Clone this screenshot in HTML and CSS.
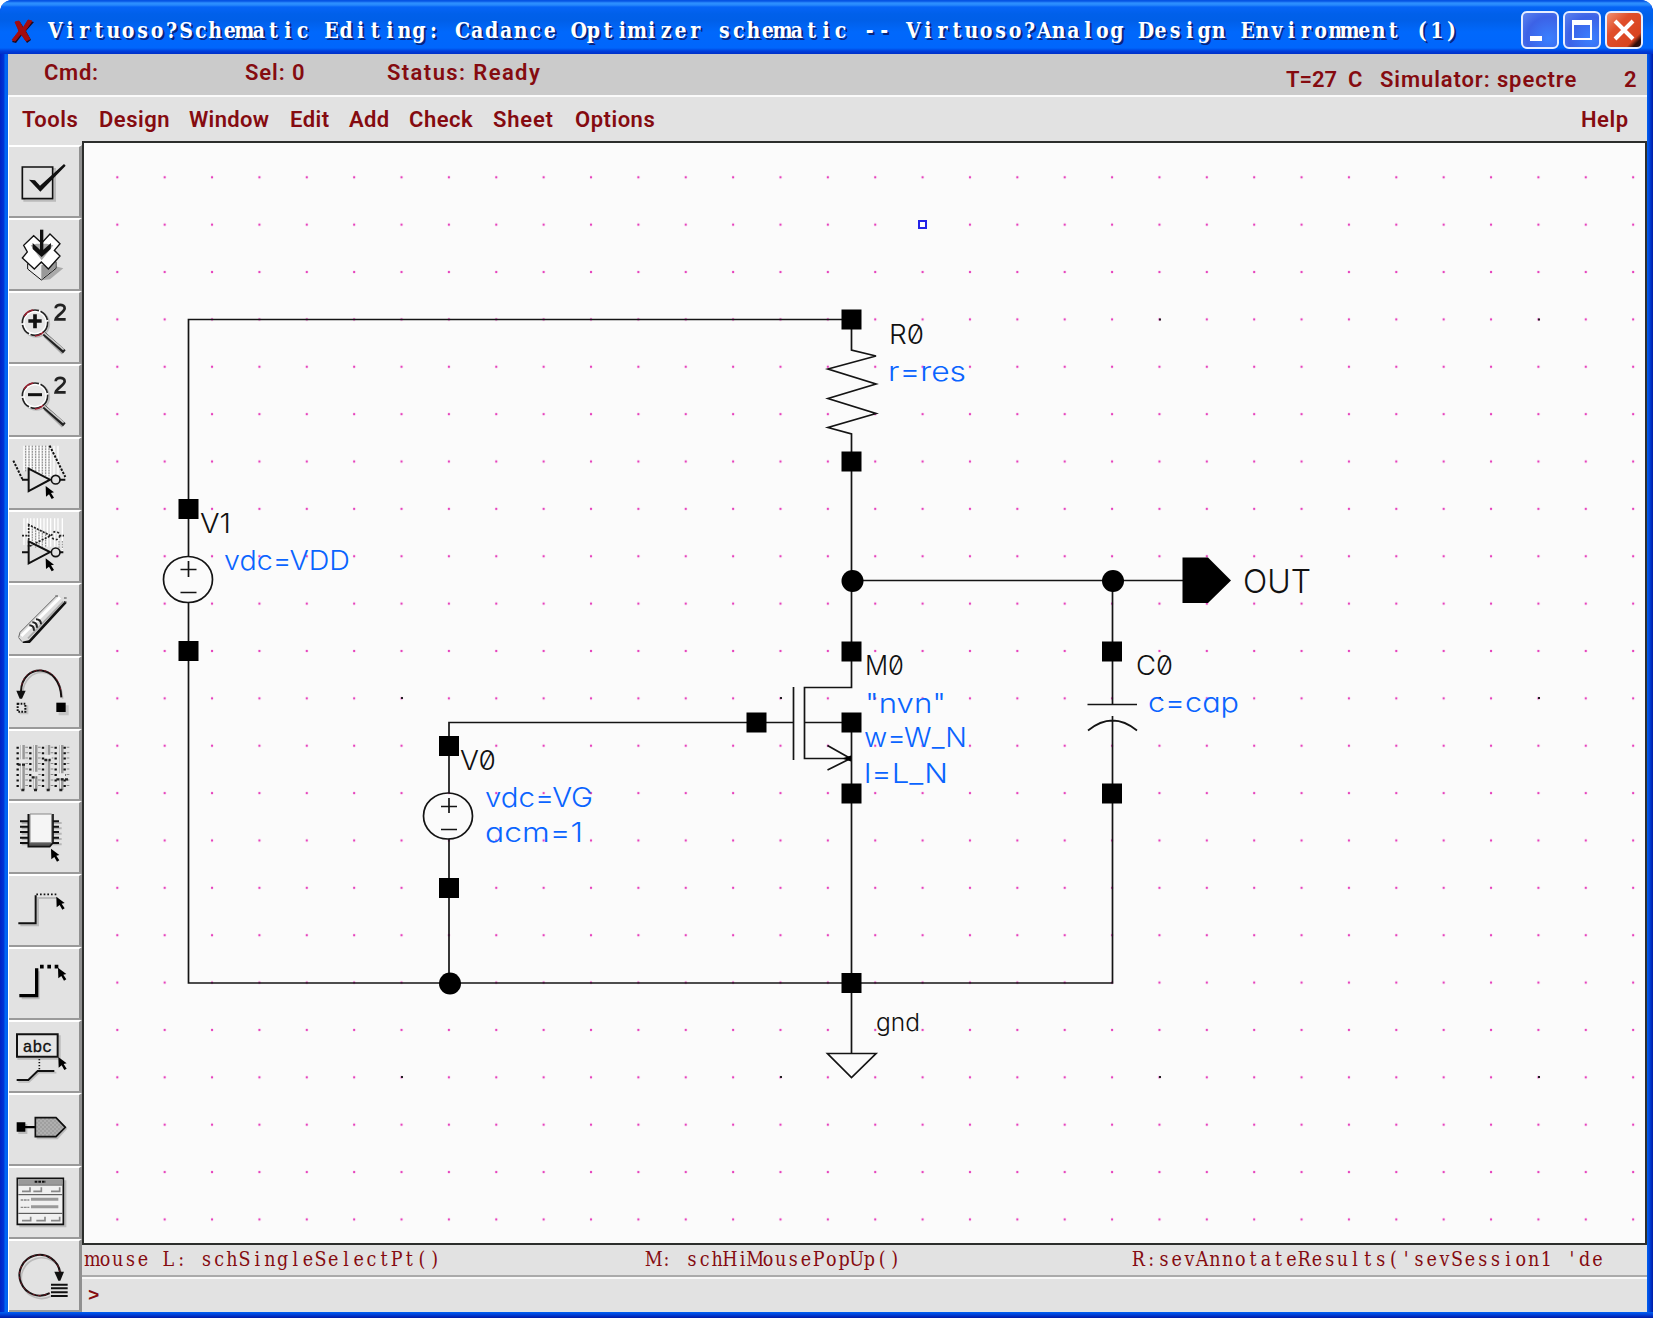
FILE: index.html
```html
<!DOCTYPE html>
<html lang="en">
<head>
<meta charset="utf-8">
<title>Virtuoso Schematic Editing</title>
<link rel="stylesheet" href="styles.css">
</head>
<body>
<div class="window">
  <header class="titlebar">
    <svg class="app-icon" viewBox="0 0 24 26"><path d="M5 3 9 3 13 9 18 2 23 3 15 12 20 21 16 24 11 16 5 24 1 23 8 13Z" fill="#1a0a20"/><path d="M4 3 8 2 12 9 17 1 21 2 14 12 19 20 15 22 10 15 4 22 1 21 8 12Z" fill="#a30c10" stroke="#a30c10"/></svg>
    <svg class="title-text" width="1430" height="40"><g transform="scale(.98 1)"><text class="mono" data-pitch="14.84" y="27">Virtuoso?Schematic Editing: Cadance Optimizer schematic -- Virtuoso?Analog Design Environment (1)</text></g></svg>
    <div class="controls">
      <button class="ctl"><svg viewBox="0 0 38 38"><path d="M9 25h12v5H9z" fill="#fff"/></svg></button>
      <button class="ctl"><svg viewBox="0 0 38 38"><path d="M10 11h18v17H10z" fill="none" stroke="#fff" stroke-width="2"/><path d="M9 9h20v5H9z" fill="#fff"/></svg></button>
      <button class="ctl close"><svg viewBox="0 0 38 38"><path d="M10 10 28 28M28 10 10 28" stroke="#fff" stroke-width="4"/></svg></button>
    </div>
  </header>

  <div class="status">
    <span class="s-cmd">Cmd:</span><span class="s-sel">Sel: 0</span><span class="s-state">Status: Ready</span>
    <span class="s-temp">T=27&nbsp; C</span><span class="s-sim">Simulator: spectre</span><span class="s-num">2</span>
  </div>

  <nav class="menu">
    <span class="m-tools">Tools</span><span class="m-design">Design</span><span class="m-window">Window</span><span class="m-edit">Edit</span><span class="m-add">Add</span><span class="m-check">Check</span><span class="m-sheet">Sheet</span><span class="m-options">Options</span><span class="m-help">Help</span>
  </nav>

  <div class="body">
    <svg class="defs" width="0" height="0"><defs>
      <path id="cursor" d="M0 0 25 19 16 21 25 35 18 39 10 25 1 32Z"/>
      <g id="lens"><circle cx="109" cy="550" r="39" fill="none" stroke="#bbb" stroke-width="5"/><path d="M135 584 190 637" stroke="#aaa" stroke-width="13"/><circle cx="105" cy="546" r="36" fill="#e6e6e6" stroke="#fff" stroke-width="9"/><circle cx="105" cy="546" r="38" fill="none" stroke="#222" stroke-width="5" stroke-dasharray="34 5"/><path d="M72 527a38 38 0 0 1 28-19M105 586a38 38 0 0 0 25-12" fill="none" stroke="#9a2030" stroke-width="4"/><path d="M132 579 193 633" stroke="#222" stroke-width="12"/><path d="M133 577 191 627" stroke="#ccc" stroke-width="5"/><path d="M167 503c0-14 27-14 27 0 0 12-24 20-27 33h30" fill="none" stroke="#222" stroke-width="8"/></g>
      <pattern id="check" width="4" height="4" patternUnits="userSpaceOnUse"><path d="M0 0h2v2H0zM2 2h2v2H2z" fill="#888"/></pattern>
    </defs></svg>
    <aside class="tools">
      <button><svg viewBox="24 16 216 218"><path d="M73 85h92v95H73z" fill="none" stroke="#bbb" stroke-width="6"/><path d="M67 79h91v95H67z" fill="#e2e2e2" stroke="#111" stroke-width="5"/><path d="M87 117 105 119 120 135 192 70 197 75 121 153Z" fill="#111"/></svg></button>
      <button><svg viewBox="24 236 216 218"><path d="M125 420 166 378 190 384 150 417Z" fill="#aaa"/><path d="M83 370v16l41 33 44-35v-20Z" fill="#eee" stroke="#111" stroke-width="3"/><path d="M124 375v42l42-33v-22Z" fill="#999"/><path d="M67 353 82 335 71 315 101 286 125 308 150 281 180 310 163 330 180 347 145 386 124 365 103 386Z" fill="#fff" stroke="#111" stroke-width="4"/><path d="M92 315 125 360 160 315 140 310 110 310Z" fill="#aaa"/><path d="M125 268v70" stroke="#111" stroke-width="10"/><path d="M98 308 120 328h10l23-20-1 18-27 24-27-24Z" fill="#111"/></svg></button>
      <button><svg viewBox="24 454 216 218"><use href="#lens"/><path d="M85 541h40M105 521v42" stroke="#111" stroke-width="11"/></svg></button>
      <button><svg viewBox="24 672 216 218"><use href="#lens" y="218"/><path d="M84 761h42" stroke="#111" stroke-width="9"/></svg></button>
      <button><svg viewBox="24 20 216 218"><path d="M72 43v75M82 43v67M92 43v70M102 43v76M112 43v80M122 43v85M132 43v90M142 43v95M152 45v90M162 43v87M174 43v87" stroke="#fff" stroke-width="4"/><path d="M77 43v80M87 43v70M97 43v70M107 43v76M117 43v80M127 43v85M137 43v90M147 43v90" stroke="#888" stroke-width="3" stroke-dasharray="5 3"/><path d="M40 88 67 143M149 43 196 137" stroke="#111" stroke-width="6" stroke-dasharray="7 4"/><path d="M86 112v67l64-34ZM66 145h20M180 145h16" fill="none" stroke="#111" stroke-width="6"/><circle cx="167" cy="145" r="13" fill="#e2e2e2" stroke="#111" stroke-width="5"/><use href="#cursor" x="137" y="164"/></svg></button>
      <button><svg viewBox="24 240 216 218"><path d="M72 262v80M82 262v80M92 262v80M102 262v80M112 262v80M122 262v82M132 262v85M142 262v85M152 262v85M164 262v85M174 262v85M187 262v98" stroke="#fff" stroke-width="4"/><path d="M97 285v60M107 290v60M117 295v55M127 298v55M137 302v45M177 330v25M187 330v25" stroke="#888" stroke-width="3" stroke-dasharray="5 3"/><path d="M86 281v66l66-33ZM66 314h18M178 314h14" fill="none" stroke="#222" stroke-width="5" stroke-dasharray="6 4"/><circle cx="167" cy="314" r="12" fill="none" stroke="#222" stroke-width="5" stroke-dasharray="6 6"/><path d="M86 331v66l64-34ZM66 364h20M180 364h10" fill="none" stroke="#111" stroke-width="6"/><circle cx="167" cy="364" r="13" fill="#e2e2e2" stroke="#111" stroke-width="5"/><use href="#cursor" x="137" y="382"/></svg></button>
      <button><svg viewBox="24 458 216 218"><path d="M68 631h20L197 512" fill="none" stroke="#111" stroke-width="8"/><path d="M55 618 60 600 168 492 195 499 84 627 67 631Z" fill="#ddd"/><path d="M64 614 180 498" stroke="#fff" stroke-width="9"/><path d="M84 621 190 511" stroke="#aaa" stroke-width="5"/><path d="M56 618 60 603 168 495M66 631 56 619" fill="none" stroke="#666" stroke-width="3"/><path d="M88 582q14 0 14 16M97 573q14 0 14 16M108 564q15 0 15 15" fill="none" stroke="#222" stroke-width="6"/><path d="M166 494h8M192 500h8M192 512h8" stroke="#444" stroke-width="3"/></svg></button>
      <button><svg viewBox="24 677 216 218"><path d="M68 786C74 700 182 700 188 802" fill="none" stroke="#bbb" stroke-width="5"/><path d="M63 780C66 694 180 694 184 798" fill="none" stroke="#151010" stroke-width="6"/><path d="M65 762C76 700 170 698 182 775" fill="none" stroke="#a02030" stroke-width="2" stroke-dasharray="8 7"/><path d="M49 778h28L66 802h-7Z" fill="#111"/><path d="M176 822h30v30h-30zM58 822h27v27H58z" fill="#c4c4c4"/><path d="M169 814h28v28h-28z" fill="#000"/><path d="M53 817h23v24H53z" fill="#e2e2e2" stroke="#111" stroke-width="6" stroke-dasharray="5 4"/></svg></button>
      <button><svg viewBox="24 10 216 218"><path d="M68 55v135M106 55v135M144 55v135M184 55v135" stroke="#999" stroke-width="13"/><path d="M65 55v135M103 55v135M141 55v135M181 55v135" stroke="#eee" stroke-width="4"/><path d="M53 60v124M91 60v124M129 60v124M167 60v124M194 60v124" stroke="#111" stroke-width="7" stroke-dasharray="6 10.4"/><path d="M80 60v124M118 60v124M156 60v124M204 60v124" stroke="#888" stroke-width="8" stroke-dasharray="3 13.4"/><path d="M57 105h18M95 142h20M135 91h20M172 147h24" stroke="#e8e8e8" stroke-width="14"/><path d="M53 114h23M95 152h14M133 100h19M169 158h38M64 190h10M102 190h10M140 190h10M178 190h10" stroke="#222" stroke-width="7" stroke-dasharray="9 4"/></svg></button>
      <button><svg viewBox="24 230 216 218"><path d="M65 293h120M65 309h120M65 325h120M65 341h120M65 357h120" stroke="#b5b5b5" stroke-width="6"/><path d="M60 288h27M60 304h27M60 320h27M60 337h27M60 353h27M155 288h22M155 304h22M155 320h22M155 337h22M155 353h22" stroke="#111" stroke-width="6"/><path d="M85 266v98h64l10-12v-86" fill="#555" stroke="#111" stroke-width="5"/><path d="M90 266h65v86H90z" fill="#f5f5f5" stroke="#888" stroke-width="3"/><use href="#cursor" x="153" y="370"/></svg></button>
      <button><svg viewBox="24 448 216 218"><path d="M61 599h53v-82h58" fill="none" stroke="#bbb" stroke-width="6"/><path d="M55 593h52v-84" fill="none" stroke="#111" stroke-width="6"/><path d="M109 506h62" stroke="#111" stroke-width="5" stroke-dasharray="5 6"/><use href="#cursor" x="169" y="513"/></svg></button>
      <button><svg viewBox="24 666 216 218"><path d="M65 816h50v-80" fill="none" stroke="#bbb" stroke-width="8"/><path d="M58 809h52v-82" fill="none" stroke="#000" stroke-width="10"/><path d="M120 722h56" stroke="#000" stroke-width="11" stroke-dasharray="11 11"/><use href="#cursor" x="174" y="725"/></svg></button>
      <button><svg viewBox="24 16 216 218"><path d="M55 62h124v67H55z" fill="none" stroke="#bbb" stroke-width="6"/><path d="M51 56h122v67H51z" fill="#e6e6e6" stroke="#111" stroke-width="6"/><text x="68" y="108" class="abc" textLength="88" lengthAdjust="spacingAndGlyphs">abc</text><path d="M55 199h32l30-28h52" fill="none" stroke="#bbb" stroke-width="5"/><path d="M50 193h35l28-27h50" fill="none" stroke="#111" stroke-width="6"/><path d="M118 130v32" stroke="#111" stroke-width="5" stroke-dasharray="4 5"/><use href="#cursor" x="175" y="124"/></svg></button>
      <button><svg viewBox="24 236 216 218"><path d="M55 326h27v30H55zM110 310h63l29 30-29 32h-63z" fill="#bbb"/><path d="M50 321h26v28H50zM76 332h30v7H76z" fill="#000"/><path d="M106 307h62l28 29-28 28h-62z" fill="#c6c6c6"/><path d="M106 307h62l28 29-28 28h-62z" fill="url(#check)" stroke="#111" stroke-width="5"/></svg></button>
      <button><svg viewBox="24 454 216 218"><path d="M58 494h141v141H58z" fill="#bbb"/><path d="M52 488h138v138H52z" fill="#f0f0f0" stroke="#111" stroke-width="5"/><path d="M55 491h132v15H55z" fill="#999"/><path d="M104 498h34" stroke="#111" stroke-width="6" stroke-dasharray="8 3"/><path d="M55 508h132M55 537h132M55 593h132" stroke="#444" stroke-width="3"/><path d="M93 551h82M93 573h82" stroke="#999" stroke-width="9"/><path d="M62 553h26M62 575h26" stroke="#888" stroke-width="4" stroke-dasharray="8 2"/><path d="M66 527h24v-12M100 527h24v-12M153 527h26v-12M66 615h26v-12M109 615h26v-12M153 615h26v-12" fill="none" stroke="#888" stroke-width="5"/></svg></button>
      <button><svg viewBox="24 670 216 218"><path d="M180 768A61 61 0 1 0 149 832" fill="none" stroke="#bbb" stroke-width="5" transform="translate(5 6)"/><path d="M180 768A61 61 0 1 0 149 829" fill="none" stroke="#151010" stroke-width="6"/><path d="M180 768A61 61 0 1 0 149 829" fill="none" stroke="#a02030" stroke-width="2" stroke-dasharray="9 8"/><path d="M163 765h29L181 792h-6Z" fill="#111"/><path d="M153 804h50M153 815h50M153 827h50M153 838h50" stroke="#111" stroke-width="6"/></svg></button>
    </aside>

    <div class="workspace">
      <svg class="canvas" viewBox="84 143 1561 1100">
        <defs><pattern id="grid" x="93.6" y="153.6" width="47.37" height="47.37" patternUnits="userSpaceOnUse"><circle cx="23.7" cy="23.7" r="1.2" fill="#e640bc"/></pattern></defs>
        <rect x="94" y="154" width="1551" height="1089" fill="url(#grid)"/>
        <g class="major"><path d="M401 698h2M780 698h2M1159 698h2M1538 698h2M401 1077h2M780 1077h2M1159 1077h2M1538 1077h2M1159 319.5h2M1538 319.5h2"/></g>
        <path d="M919 221h7v7h-7z" fill="#fff" stroke="#2424e8" stroke-width="2"/>
        <g class="wire">
          <path d="M188.500 509V319.5H851.5V350L876 356 828 369 876 384 828 398.500 876 413.500 828 427.500 851.500 434V651M188.500 509v47M188.500 602V983H1112.500V793"/>
          <path d="M449 745V722.500H793.500M449 745v48M449 839V983M851.500 651v36.500H804.500v71H851.500M804.500 722.500H851.500V1053.500M793.500 687v73M827.500 745.500 850.500 758.500 827.500 770M851.500 580.500H1184M1112.500 580.500V704.500M1087.500 704.500h49.500M1112.500 793V716M1088 730.500q24.500-20 49 0M827.500 1053.500h48.500L851.500 1077.500Z"/>
          <ellipse cx="188" cy="579.500" rx="24.500" ry="23"/><path d="M180.500 569.500h16M188.500 561v16M180.500 592.500h16"/>
          <ellipse cx="448" cy="816" rx="24.500" ry="23"/><path d="M441 806.500h16M449 798v15M441 829.500h16"/>
        </g>
        <path d="M178.500 499h20v20h-20zM178.500 641h20v20h-20zM439 736h20v20h-20zM439 878h20v20h-20zM746.500 712.500h20v20h-20zM841.500 309.500h20v20h-20zM841.500 451.500h20v20h-20zM841.500 641.500h20v20h-20zM841.500 712.500h20v20h-20zM841.500 783.500h20v20h-20zM841.500 973h20v20h-20zM1102 641.500h20v20h-20zM1102 783.500h20v20h-20zM1182.500 557.500h25.500l23 23-23 22.500h-25.500z"/>
        <circle cx="852.500" cy="581" r="11"/><circle cx="1113" cy="581" r="11"/><circle cx="450" cy="983.500" r="11"/>
        <path d="M842 758.500l9-3v6z"/>
        <g class="label">
          <text x="200" y="533" textLength="31" lengthAdjust="spacingAndGlyphs">V1</text><text x="889" y="344" textLength="35" lengthAdjust="spacingAndGlyphs">R0</text><text x="865" y="675" textLength="39" lengthAdjust="spacingAndGlyphs">M0</text><text x="1136" y="675" textLength="37" lengthAdjust="spacingAndGlyphs">C0</text><text x="460" y="770" textLength="36" lengthAdjust="spacingAndGlyphs">V0</text>
          <text class="small" x="876" y="1031" textLength="44" lengthAdjust="spacingAndGlyphs">gnd</text><text class="big" x="1243" y="593" textLength="68" lengthAdjust="spacingAndGlyphs">OUT</text>
        </g>
        <g class="label prop">
          <text x="224" y="569.500" textLength="126" lengthAdjust="spacingAndGlyphs">vdc=VDD</text><text x="888" y="380.500" textLength="78" lengthAdjust="spacingAndGlyphs">r=res</text><text x="865" y="712.500" textLength="81" lengthAdjust="spacingAndGlyphs">"nvn"</text><text x="864" y="747" textLength="103" lengthAdjust="spacingAndGlyphs">w=W_N</text><text x="864" y="783" textLength="84" lengthAdjust="spacingAndGlyphs">l=L_N</text><text x="1148" y="712" textLength="91" lengthAdjust="spacingAndGlyphs">c=cap</text><text x="485" y="806.500" textLength="108" lengthAdjust="spacingAndGlyphs">vdc=VG</text><text x="485" y="842" textLength="98" lengthAdjust="spacingAndGlyphs">acm=1</text>
        </g>
      </svg>
      <svg class="mouse" viewBox="84 1245 1561 30"><text class="mono" data-pitch="12.68" data-x="86" y="1266">mouse L: schSingleSelectPt()</text><text class="mono" data-pitch="12.68" data-x="647.500" y="1266">M: schHiMousePopUp()</text><text class="mono" data-pitch="12.75" data-x="1132" y="1266">R:sevAnnotateResults('sevSession1 'de</text></svg>
      <div class="prompt">&gt;</div>
    </div>
  </div>
</div>
<script src="app.js"></script>
</body>
</html>
```
FILE: app.js
```js
// Places the characters of fixed-pitch lines on an even character grid.
document.querySelectorAll('text.mono').forEach(function (t) {
  var pitch = +t.dataset.pitch, start = +(t.dataset.x || 0);
  t.setAttribute('x', Array.from(t.textContent, function (_, i) {
    return (start + (i + 0.5) * pitch).toFixed(2);
  }).join(' '));
});
```
FILE: styles.css
```css
* { box-sizing: border-box; }
body { margin: 0; background: #fff; overflow: hidden; }
svg { display: block; }
button { padding: 0; margin: 0; background: none; border: 0; }

.window {
  width: 1653px; height: 1318px;
  display: flex; flex-direction: column;
  padding: 0 6px 6px 8px;
  border-radius: 12px 12px 0 0;
  background: linear-gradient(90deg, #0023c4 0, #0034d8 4px, #0068f4 5px, #0060ee 8px, #0060ee 1647px, #0048e0 1649px, #001ca8 1653px);
  font-family: Roboto, "Liberation Sans", sans-serif;
  color: #850b10;
  position: relative;
}
.window::after {
  content: ""; position: absolute; left: 0; right: 0; bottom: 0; height: 6px;
  background: linear-gradient(#0060f0, #0044dc 40%, #0018a4);
}
.titlebar {
  height: 54px; flex: none; margin: 0 -6px 0 -8px; padding: 11px 10px 0 11px;
  display: flex; border-radius: 12px 12px 0 0;
  background: linear-gradient(#0654e4 0, #0654e4 1px, #2e90ff 3px, #2788fc 5px, #0664f6 7px, #0060ea 14px, #005fe8 20px, #0068fc 32px, #0066fc 48px, #0040dc 51px, #002fc8 54px);
}
.app-icon { width: 24px; height: 26px; margin-top: 8px; }
.title-text { margin-left: 13px; overflow: visible; }
.mono { font-family: "DejaVu Serif", serif; text-anchor: middle; }
.title-text .mono { font-size: 21.5px; font-weight: bold; font-stretch: condensed; fill: #fff; text-shadow: 2px 2px 0 #08247c; }
.controls { display: flex; gap: 4px; margin-left: auto; }
.ctl {
  width: 38px; height: 38px; border: 2px solid #e6eeff; border-radius: 6px;
  background: radial-gradient(circle at 75% 75%, #3a80ff, #3c62e6 60%, #5c84f0);
}
.ctl svg { width: 38px; height: 38px; margin: -2px; }
.ctl.close { background: linear-gradient(135deg, #f09070, #e04f2c 35%, #d84420 78%, #30100c 88%); }

.status {
  height: 41px; flex: none; display: flex; padding-left: 36px;
  background: #cbcbcb; font-size: 22px; font-weight: 600; line-height: 26px;
  padding-top: 6px; white-space: pre; letter-spacing: .9px;
}
.s-cmd { width: 201px; letter-spacing: .7px; }
.s-sel { width: 142px; }
.s-state { letter-spacing: 1.4px; }
.s-temp { margin-left: auto; width: 94px; letter-spacing: 0; }
.s-sim { width: 244px; }
.s-num { width: 23px; }
.s-temp, .s-sim, .s-num { padding-top: 7px; }

.menu {
  height: 46px; flex: none; display: flex; padding: 9px 0 0 13px;
  background: #e2e2e2; border-top: 2px solid #fafafa; border-left: 1px solid #fff;
  font-size: 22px; font-weight: 600; line-height: 28px; letter-spacing: .5px;
}
.m-tools { width: 77px; } .m-design { width: 90px; } .m-window { width: 101px; letter-spacing: .3px; }
.m-edit { width: 59px; } .m-add { width: 60px; letter-spacing: .3px; } .m-check { width: 84px; }
.m-sheet { width: 82px; letter-spacing: .8px; } .m-help { margin-left: auto; width: 66px; }

.body { flex: 1; display: flex; min-height: 0; }
.defs { position: absolute; }
.tools {
  width: 74px; display: grid; grid-template-rows: repeat(16, 1fr);
  background: #e2e2e2; padding-top: 4px; border-left: 1px solid #fff;
}
.tools button {
  min-height: 0; overflow: hidden;
  border-top: 2px solid #fff; border-bottom: 2px solid #9a9a9a; border-right: 3px solid #909090;
}
.tools svg { width: 72px; height: 72.700px; margin: -1px 0 0 -1px; }
.abc { font: 49px "Liberation Mono", monospace; fill: #111; stroke: #111; }

.workspace { flex: 1; display: flex; flex-direction: column; background: #e2e2e2; }
.canvas {
  width: 1565px; height: 1104px; flex: none;
  background: #fbfbfb; border: 2px solid #2c2e2c;
}
.major { stroke: #222; stroke-width: 2; }
.wire { fill: none; stroke: #141414; stroke-width: 1.700; }
.label { font-family: Inter, sans-serif; font-weight: 300; font-size: 27px; fill: #111; font-feature-settings: "zero", "cv11"; }
.label .small { font-size: 24px; }
.label .big { font-size: 33px; }
.label.prop { fill: #0a64ff; }
.mouse { width: 1561px; height: 30px; margin-left: 2px; flex: none; }
.mouse .mono { font-size: 19.5px; fill: #850b10; font-stretch: condensed; }
.prompt {
  flex: 1; border-top: 2px solid #aaa; box-shadow: inset 0 2px #f8f8f8;
  font: bold 19px/38px "Liberation Mono", monospace; padding-left: 6px;
}
```
